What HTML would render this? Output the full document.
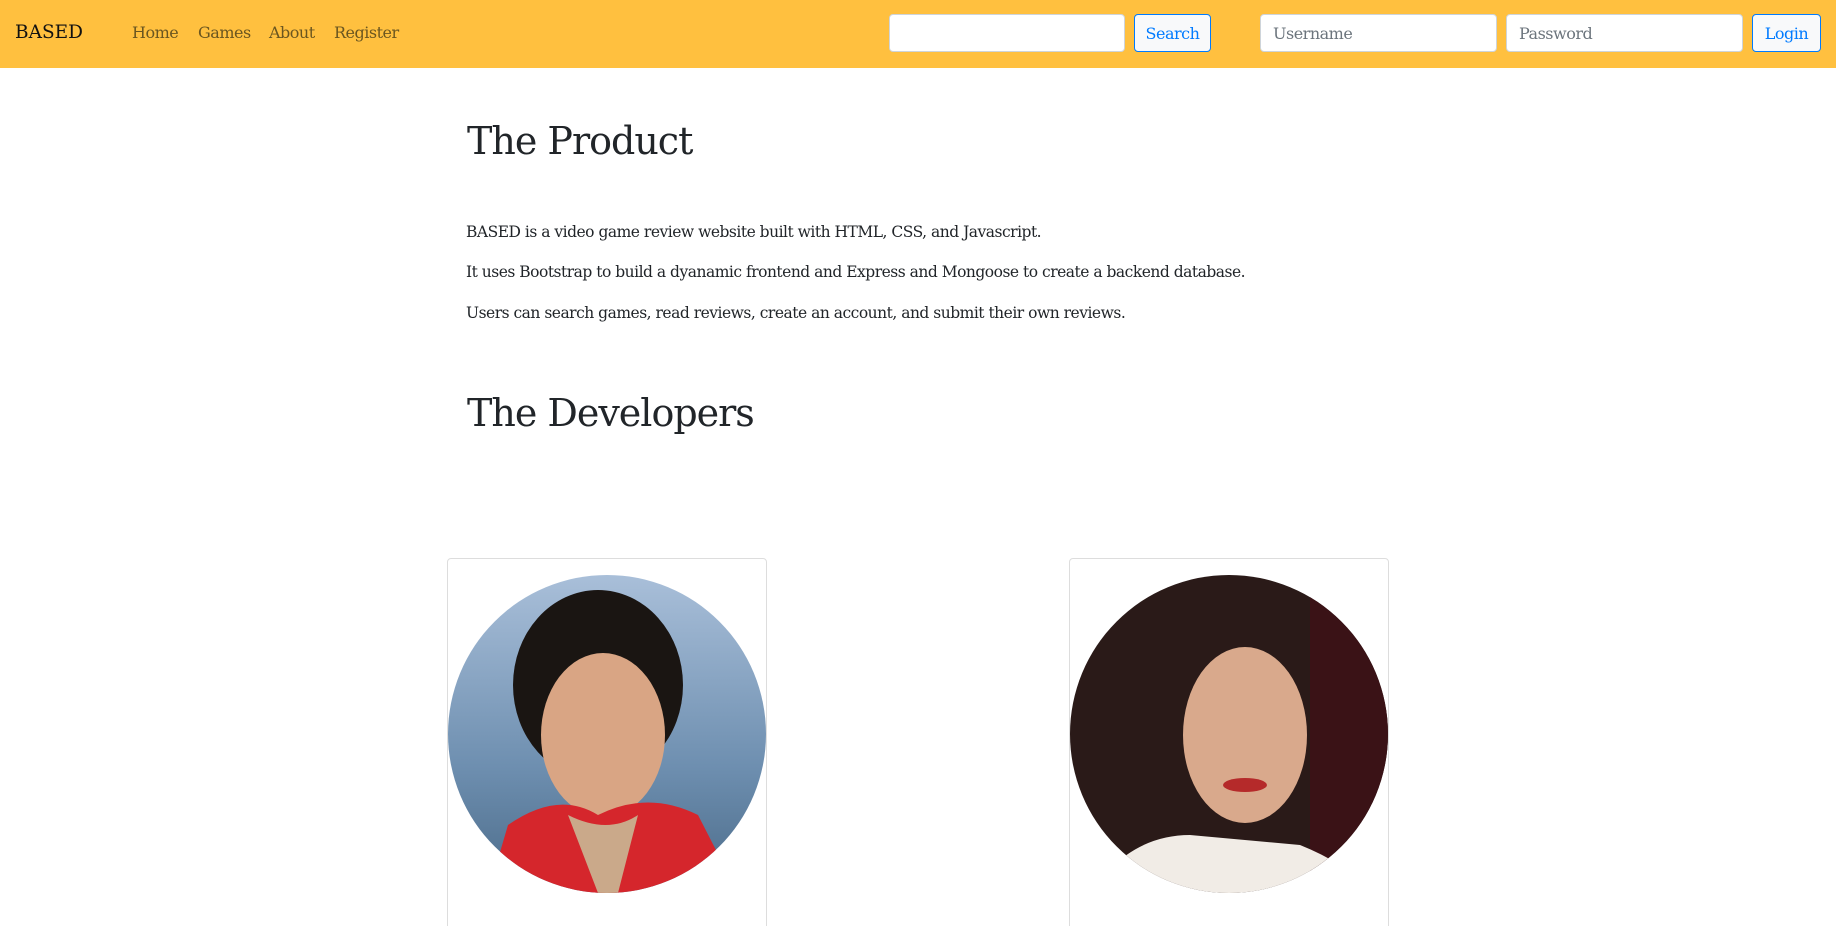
<!DOCTYPE html>
<html><head><meta charset="utf-8"><style>
*{box-sizing:border-box;margin:0;padding:0}
html,body{width:1836px;height:926px;overflow:hidden;background:#fff;font-family:"DejaVu Serif","Liberation Serif",serif;color:#212529}
#wrap{position:relative;width:1836px;height:926px;overflow:hidden}
.nav{position:absolute;left:0;top:0;width:1836px;height:68px;background:#ffc03f}
.brand{position:absolute;left:15px;top:22px;font-size:18.5px;color:#111}
.link{position:absolute;top:23px;font-size:16px;color:#6b5620;letter-spacing:-0.5px}
.inp{position:absolute;top:14px;height:38px;background:#fff;border:1px solid #ced4da;border-radius:4px;font-size:16px;color:#6c757d;padding:9px 12px;letter-spacing:-0.5px}
.btn{position:absolute;top:14px;height:38px;background:#f8f9fa;border:1px solid #007bff;border-radius:4px;font-size:16px;color:#007bff;text-align:center;padding-top:9px;letter-spacing:-0.5px}
h1{position:absolute;left:467px;font-weight:normal;font-size:38px;letter-spacing:-1px;color:#212529}
p{position:absolute;left:466px;font-size:15.5px;letter-spacing:-0.5px;color:#212529}
.card{position:absolute;top:558px;width:320px;height:380px;border:1px solid #ddd;border-radius:4px}
svg{position:absolute;top:575px}
</style></head><body><div id="wrap">
<div class="nav">
<div class="brand">BASED</div>
<div class="link" style="left:132px">Home</div>
<div class="link" style="left:198px">Games</div>
<div class="link" style="left:269px">About</div>
<div class="link" style="left:334px">Register</div>
<div class="inp" style="left:889px;width:236px"></div>
<div class="btn" style="left:1134px;width:77px">Search</div>
<div class="inp" style="left:1260px;width:237px">Username</div>
<div class="inp" style="left:1506px;width:237px">Password</div>
<div class="btn" style="left:1752px;width:69px">Login</div>
</div>
<h1 style="top:119px">The Product</h1>
<p style="top:223px">BASED is a video game review website built with HTML, CSS, and Javascript.</p>
<p style="top:263px">It uses Bootstrap to build a dyanamic frontend and Express and Mongoose to create a backend database.</p>
<p style="top:304px">Users can search games, read reviews, create an account, and submit their own reviews.</p>
<h1 style="top:391px">The Developers</h1>
<div class="card" style="left:447px"></div>
<div class="card" style="left:1069px"></div>
<svg style="left:448px" width="318" height="318" viewBox="0 0 318 318">
<defs><clipPath id="c1"><circle cx="159" cy="159" r="159"/></clipPath>
<linearGradient id="sky" x1="0" y1="0" x2="0" y2="1"><stop offset="0" stop-color="#a9bfd9"/><stop offset="0.6" stop-color="#6e8fb0"/><stop offset="1" stop-color="#4a6a88"/></linearGradient></defs>
<g clip-path="url(#c1)">
<rect width="318" height="318" fill="url(#sky)"/>
<ellipse cx="150" cy="110" rx="85" ry="95" fill="#1a1512"/>
<ellipse cx="155" cy="160" rx="62" ry="82" fill="#d9a584"/>
<path d="M40 318 L60 250 Q110 215 150 240 Q200 215 250 240 L290 318Z" fill="#d5262c"/>
<path d="M120 240 L150 318 L170 318 L190 240 Q160 260 120 240Z" fill="#caa98a"/>
</g></svg>
<svg style="left:1070px" width="318" height="318" viewBox="0 0 318 318">
<defs><clipPath id="c2"><circle cx="159" cy="159" r="159"/></clipPath></defs>
<g clip-path="url(#c2)">
<rect width="318" height="318" fill="#2a1a18"/>
<rect x="240" width="78" height="318" fill="#3a1216"/>
<ellipse cx="175" cy="160" rx="62" ry="88" fill="#d9a98c"/>
<ellipse cx="175" cy="210" rx="22" ry="7" fill="#b52a2a"/>
<path d="M20 318 Q60 260 120 260 L230 270 Q280 290 300 318Z" fill="#f1ece6"/>
</g></svg>
</div></body></html>
